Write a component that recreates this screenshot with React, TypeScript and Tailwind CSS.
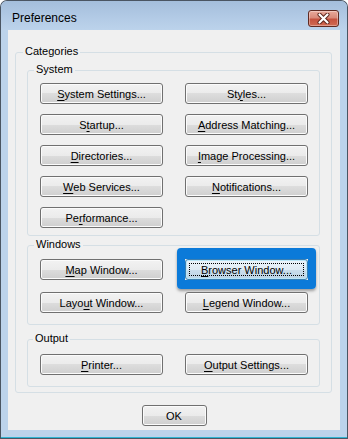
import type { ReactNode } from 'react';
import clsx from 'clsx';

const FONT = "font-['Liberation_Sans',Arial,sans-serif]";

type Item = {
  text: string;
  u?: number;
  focused?: boolean;
};

const systemItems: Item[] = [
  { text: 'System Settings...', u: 0 },
  { text: 'Styles...', u: 2 },
  { text: 'Startup...', u: 1 },
  { text: 'Address Matching...', u: 0 },
  { text: 'Directories...', u: 0 },
  { text: 'Image Processing...', u: 0 },
  { text: 'Web Services...', u: 0 },
  { text: 'Notifications...', u: 0 },
  { text: 'Performance...', u: 2 },
];

const windowItems: Item[] = [
  { text: 'Map Window...', u: 0 },
  { text: 'Browser Window...', u: 0, focused: true },
  { text: 'Layout Window...', u: 4 },
  { text: 'Legend Window...', u: 0 },
];

const outputItems: Item[] = [
  { text: 'Printer...', u: 0 },
  { text: 'Output Settings...', u: 0 },
];

function AccessText({ text, u }: { text: string; u?: number }) {
  if (u === undefined) return <>{text}</>;
  return (
    <>
      {text.slice(0, u)}
      <span className="underline underline-offset-[2px]">{text[u]}</span>
      {text.slice(u + 1)}
    </>
  );
}

function WinButton({ text, u, focused, className }: Item & { className?: string }) {
  return (
    <div className={clsx('relative', className)}>
      {focused && (
        <span className="absolute -left-[8px] -right-[8px] -top-[11px] -bottom-[9px] rounded-[4px] border-x-[8px] border-t-[11px] border-b-[9px] border-[#0b7ad9] shadow-[0_2px_3px_rgba(0,0,0,0.35)]" />
      )}
      <button
        className={clsx(
          'relative flex h-[21px] w-full items-center justify-center rounded-[3px] border text-[11px] leading-none text-black',
          focused
            ? 'border-[#3c7fb1] bg-[linear-gradient(#ecf4fa_0%,#dfebf4_50%,#cbdeec_50%,#bdd4e6_100%)] shadow-[inset_0_0_0_1px_#b8e6f8]'
            : 'border-[#707070] bg-[linear-gradient(#f2f2f2_0%,#ebebeb_50%,#dddddd_50%,#cfcfcf_100%)] shadow-[inset_0_0_0_1px_#fbfbfb]'
        )}
      >
        {focused && <span className="absolute inset-[3px] border border-dotted border-black" />}
        <span className="pt-[1px]">
          <AccessText text={text} u={u} />
        </span>
      </button>
    </div>
  );
}

function Group({
  label,
  labelLeft,
  className,
  children,
}: {
  label: string;
  labelLeft: string;
  className?: string;
  children: ReactNode;
}) {
  return (
    <div className={clsx('relative rounded-[3px] border border-[#d5dfe5]', className)}>
      <span
        className={clsx(
          'absolute -top-[8px] bg-[#f0f0f0] px-[2px] text-[11px] leading-[13px] text-black',
          labelLeft
        )}
      >
        {label}
      </span>
      {children}
    </div>
  );
}

function ButtonGrid({ items, gapY }: { items: Item[]; gapY: string }) {
  return (
    <div className={clsx('grid grid-cols-[123px_123px] gap-x-[22px] pl-[12px]', gapY)}>
      {items.map((item) => (
        <WinButton key={item.text} {...item} />
      ))}
    </div>
  );
}

function CloseButton() {
  return (
    <div className="flex h-[17px] w-[31px] items-center justify-center rounded-[3px] border border-[#5f2a22] bg-[linear-gradient(#e9a99b_0%,#d98a7a_45%,#c5523f_55%,#d06a52_100%)] shadow-[inset_0_0_0_1px_rgba(255,255,255,0.35)]">
      <svg width="13" height="11" viewBox="0 0 13 11">
        <path d="M2.5 1.5 L10.5 9.5 M10.5 1.5 L2.5 9.5" stroke="#5a2219" strokeWidth="4" strokeLinecap="round" />
        <path d="M2.5 1.5 L10.5 9.5 M10.5 1.5 L2.5 9.5" stroke="#ffffff" strokeWidth="2.2" strokeLinecap="round" />
      </svg>
    </div>
  );
}

function App() {
  return (
    <div className={clsx('h-[439px] w-[348px] overflow-hidden bg-white', FONT)}>
      <div className="flex h-[439px] w-[348px] flex-col rounded-t-[7px] border-x border-t border-[#4a5562] bg-[#bcd3eb]">
        <div className="flex h-[29px] shrink-0 items-start justify-between rounded-t-[6px] bg-[linear-gradient(#a4bedb,#b3cbe6_60%,#bcd3eb)] pl-[11px] pr-[8px]">
          <span className="pt-[10px] text-[12px] leading-[14px] text-black">Preferences</span>
          <div className="pt-[9px]">
            <CloseButton />
          </div>
        </div>

        <div className="mx-[7px] flex h-[400px] shrink-0 flex-col bg-[#f0f0f0]">
          <Group label="Categories" labelLeft="left-[7px]" className="ml-[7px] mt-[22px] w-[317px] pb-[5px]">
            <Group label="System" labelLeft="left-[6px]" className="mx-[11px] mt-[17px] pb-[7px] pt-[12px]">
              <ButtonGrid items={systemItems} gapY="gap-y-[10px]" />
            </Group>
            <Group label="Windows" labelLeft="left-[6px]" className="mx-[11px] mt-[9px] pb-[11px] pt-[13px]">
              <ButtonGrid items={windowItems} gapY="gap-y-[12px]" />
            </Group>
            <Group label="Output" labelLeft="left-[5px]" className="mx-[11px] mt-[14px] pb-[11px] pt-[14px]">
              <ButtonGrid items={outputItems} gapY="gap-y-[12px]" />
            </Group>
          </Group>
          <div className="mt-[12px] flex justify-center">
            <WinButton text="OK" className="w-[65px]" />
          </div>
        </div>

        <div className="h-[7px] shrink-0" />
        <div className="h-[1px] shrink-0 bg-[#2fb4d2]" />
        <div className="h-[1px] shrink-0 bg-[#4a5562]" />
      </div>
    </div>
  );
}

export default App;
